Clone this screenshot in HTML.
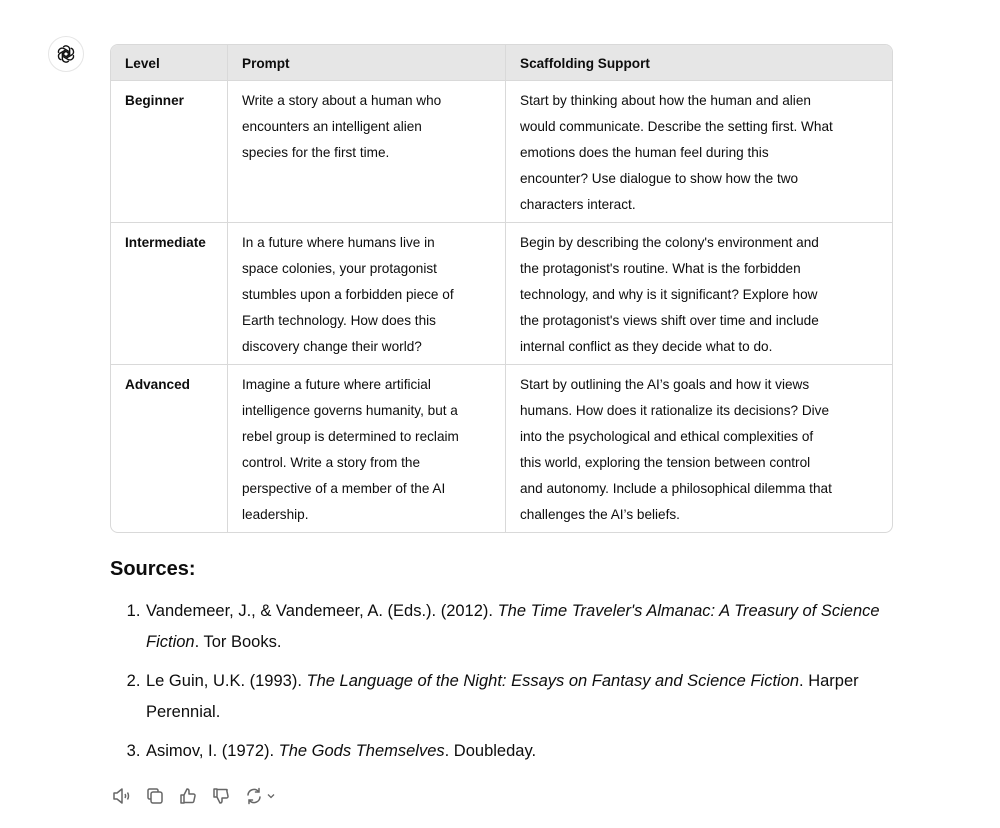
<!DOCTYPE html>
<html><head><meta charset="utf-8"><style>
body{margin:0;background:#fff;font-family:"Liberation Sans",sans-serif;color:#0d0d0d;width:1000px;height:828px;overflow:hidden;position:relative}
.logo{position:absolute;left:48px;top:36px;width:36px;height:36px;border:1px solid #e5e5e5;border-radius:50%;box-sizing:border-box;display:flex;align-items:center;justify-content:center}
table{position:absolute;left:110px;top:44px;width:783px;border-collapse:separate;border-spacing:0;border:1px solid #d9d9d9;border-radius:8px;overflow:hidden;font-size:13.6px}
th,td{text-align:left;vertical-align:top;padding:7px 14px 4px 14px;line-height:26px;border-right:1px solid #d9d9d9;border-bottom:1px solid #d9d9d9;box-sizing:border-box}
th:last-child,td:last-child{border-right:none}
tr:last-child td{border-bottom:none}
th{background:#e6e6e6;font-weight:600;padding:6px 14px 3px 14px}
td:first-child{font-weight:600}
h3{position:absolute;left:110px;top:558px;margin:0;font-size:20px;font-weight:600}
ol{position:absolute;left:110px;top:596px;margin:0;padding-left:35px;font-size:16.5px;line-height:31px;width:765px}
ol li{margin-bottom:8px;padding-left:1px}
.icons{position:absolute;left:112px;top:786px;display:flex;gap:13px;align-items:center}
</style></head><body>
<div class="logo"><svg width="22" height="22" viewBox="0 0 24 24" fill="none" stroke="#111" stroke-width="1.5"><g><path d="M9 4.5a4 4 0 0 1 7 2.5v5.5l-4.5 2.6"/><path d="M9 4.5a4 4 0 0 1 7 2.5v5.5l-4.5 2.6" transform="rotate(60 12 12)"/><path d="M9 4.5a4 4 0 0 1 7 2.5v5.5l-4.5 2.6" transform="rotate(120 12 12)"/><path d="M9 4.5a4 4 0 0 1 7 2.5v5.5l-4.5 2.6" transform="rotate(180 12 12)"/><path d="M9 4.5a4 4 0 0 1 7 2.5v5.5l-4.5 2.6" transform="rotate(240 12 12)"/><path d="M9 4.5a4 4 0 0 1 7 2.5v5.5l-4.5 2.6" transform="rotate(300 12 12)"/></g></svg></div>
<table>
<colgroup><col style="width:117px"><col style="width:278px"><col></colgroup>
<tr style="height:36px"><th>Level</th><th>Prompt</th><th>Scaffolding Support</th></tr>
<tr style="height:142px"><td>Beginner</td><td>Write a story about a human who<br>encounters an intelligent alien<br>species for the first time.</td><td>Start by thinking about how the human and alien<br>would communicate. Describe the setting first. What<br>emotions does the human feel during this<br>encounter? Use dialogue to show how the two<br>characters interact.</td></tr>
<tr style="height:142px"><td>Intermediate</td><td>In a future where humans live in<br>space colonies, your protagonist<br>stumbles upon a forbidden piece of<br>Earth technology. How does this<br>discovery change their world?</td><td>Begin by describing the colony's environment and<br>the protagonist's routine. What is the forbidden<br>technology, and why is it significant? Explore how<br>the protagonist's views shift over time and include<br>internal conflict as they decide what to do.</td></tr>
<tr style="height:167px"><td>Advanced</td><td>Imagine a future where artificial<br>intelligence governs humanity, but a<br>rebel group is determined to reclaim<br>control. Write a story from the<br>perspective of a member of the AI<br>leadership.</td><td>Start by outlining the AI’s goals and how it views<br>humans. How does it rationalize its decisions? Dive<br>into the psychological and ethical complexities of<br>this world, exploring the tension between control<br>and autonomy. Include a philosophical dilemma that<br>challenges the AI’s beliefs.</td></tr>
</table>
<h3>Sources:</h3>
<ol>
<li>Vandemeer, J., &amp; Vandemeer, A. (Eds.). (2012). <i>The Time Traveler's Almanac: A Treasury of Science Fiction</i>. Tor Books.</li>
<li>Le Guin, U.K. (1993). <i>The Language of the Night: Essays on Fantasy and Science Fiction</i>. Harper Perennial.</li>
<li>Asimov, I. (1972). <i>The Gods Themselves</i>. Doubleday.</li>
</ol>
<div class="icons">
<svg width="20" height="20" viewBox="0 0 20 20" fill="none" stroke="#666" stroke-width="1.5" stroke-linejoin="round"><path d="M2 7h3l5-4v14l-5-4H2z"/><path d="M13 8c.7 1.2.7 2.8 0 4M15.5 6.5c1.3 2 1.3 5 0 7"/></svg>
<svg width="20" height="20" viewBox="0 0 20 20" fill="none" stroke="#666" stroke-width="1.5"><rect x="6" y="6" width="11" height="11" rx="2"/><path d="M13 6V4.5A1.5 1.5 0 0 0 11.5 3h-7A1.5 1.5 0 0 0 3 4.5v7A1.5 1.5 0 0 0 4.5 13H6"/></svg>
<svg width="20" height="20" viewBox="0 0 20 20" fill="none" stroke="#666" stroke-width="1.5" stroke-linejoin="round"><path d="M3 9h3v8H3zM6 9l3-6c1.5 0 2 1 2 2v3h4.5c1 0 1.7.9 1.5 1.8l-1.2 5.5c-.2.7-.8 1.2-1.5 1.2H6"/></svg>
<svg width="20" height="20" viewBox="0 0 20 20" fill="none" stroke="#666" stroke-width="1.5" stroke-linejoin="round"><path d="M3 11h3V3H3zM6 11l3 6c1.5 0 2-1 2-2v-3h4.5c1 0 1.7-.9 1.5-1.8l-1.2-5.5C16.6 4 16 3.5 15.3 3.5H6"/></svg>
<span style="display:flex;align-items:center;gap:2px"><svg width="20" height="20" viewBox="0 0 20 20" fill="none" stroke="#666" stroke-width="1.5" stroke-linecap="round"><path d="M4 9a6 6 0 0 1 10.5-3.5M16 11a6 6 0 0 1-10.5 3.5"/><path d="M15 2.5v3.5h-3.5M5 17.5V14h3.5"/></svg><svg width="10" height="10" viewBox="0 0 10 10" fill="none" stroke="#666" stroke-width="1.3"><path d="M2 3.5l3 3 3-3"/></svg></span>
</div>
</body></html>
